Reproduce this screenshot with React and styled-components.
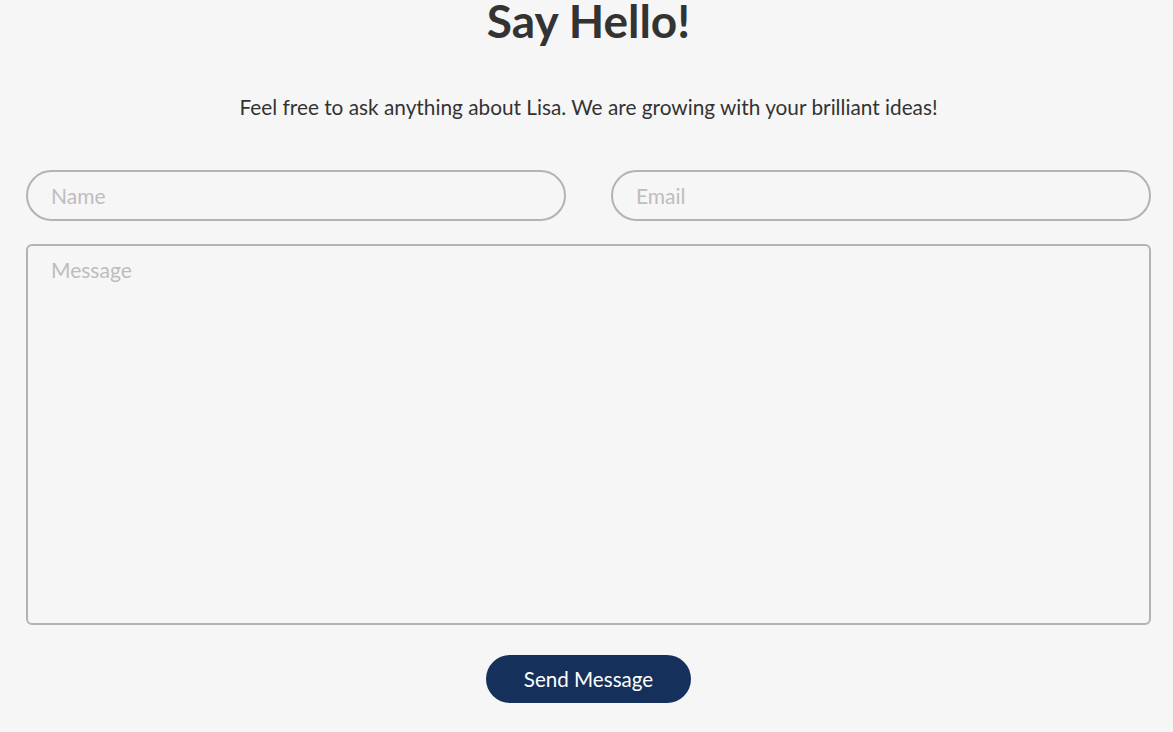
import React from "react";
import styled, { createGlobalStyle } from "styled-components";

const GlobalStyle = createGlobalStyle`
  html, body {
    margin: 0;
    padding: 0;
    background: #f6f6f6;
    font-family: Lato, "Open Sans", sans-serif;
    color: #333;
  }
  * { box-sizing: border-box; }
`;

const Section = styled.section`
  padding: 0 22px 0 26px;
`;

const Title = styled.h1`
  margin: 1px 0 0;
  font-size: 46px;
  line-height: 40px;
  font-weight: 700;
  text-align: center;
  color: #333;
`;

const Lead = styled.p`
  margin: 53px 0 0;
  font-size: 20.8px;
  line-height: 25px;
  text-align: center;
  color: #333;
`;

const Form = styled.form`
  margin-top: 51px;
  display: flex;
  flex-direction: column;
  gap: 23px;
`;

const Row = styled.div`
  display: grid;
  grid-template-columns: 1fr 1fr;
  column-gap: 45px;
`;

const fieldBase = `
  width: 100%;
  background: transparent;
  border: 2px solid #b3b3b3;
  font-family: Lato, "Open Sans", sans-serif;
  font-size: 21px;
  color: #333;
  padding-left: 23px;
  outline: none;
  &::placeholder { color: #bdbdbd; }
`;

const Input = styled.input`
  ${fieldBase}
  height: 51px;
  border-radius: 26px;
`;

const TextArea = styled.textarea`
  ${fieldBase}
  height: 381px;
  border-radius: 6px;
  padding-top: 11px;
  resize: none;
  display: block;
`;

const Actions = styled.div`
  display: flex;
  justify-content: center;
  margin-top: 7px;
`;

const Button = styled.button`
  width: 205px;
  height: 48px;
  border: none;
  border-radius: 24px;
  background: #15305a;
  color: #fff;
  font-family: Lato, "Open Sans", sans-serif;
  font-size: 20.6px;
  cursor: pointer;
`;

export default function App() {
  return (
    <>
      <GlobalStyle />
      <Section>
        <Title>Say Hello!</Title>
        <Lead>Feel free to ask anything about Lisa. We are growing with your brilliant ideas!</Lead>
        <Form onSubmit={e => e.preventDefault()}>
          <Row>
            <Input placeholder="Name" />
            <Input placeholder="Email" />
          </Row>
          <TextArea placeholder="Message" />
          <Actions>
            <Button type="submit">Send Message</Button>
          </Actions>
        </Form>
      </Section>
    </>
  );
}
